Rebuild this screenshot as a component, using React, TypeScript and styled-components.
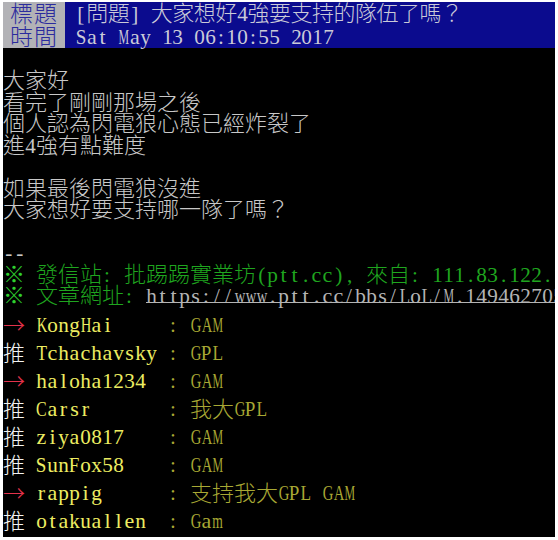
import React from 'react';
import styled, { createGlobalStyle } from 'styled-components';

interface Seg {
  t: string;
  c: string;
  u?: boolean;
}

const GRAY = '#c8c8c8';
const GREEN_HI = '#2fd02f';
const GREEN = '#1fa51f';
const LINK = '#b4b4b4';
const WHITE = '#f2f2f2';
const RED = '#e3324c';
const YELLOW = '#eded62';
const OLIVE = '#a8a834';

// Times-style advance widths (em), used to squeeze latin glyphs into a half-width cell
const EM: Record<string, number> = {
  A: .722, B: .667, C: .667, D: .722, E: .611, F: .556, G: .722, H: .722, I: .333, J: .389,
  K: .722, L: .611, M: .889, N: .722, O: .722, P: .556, Q: .722, R: .667, S: .556, T: .611,
  U: .722, V: .722, W: .944, X: .722, Y: .722, Z: .611,
  a: .444, b: .5, c: .444, d: .5, e: .444, f: .333, g: .5, h: .5, i: .278, j: .278, k: .5,
  l: .278, m: .778, n: .5, o: .5, p: .5, q: .5, r: .333, s: .389, t: .278, u: .5, v: .5,
  w: .722, x: .5, y: .5, z: .444,
};

const fit = (ch: string) => {
  const w = (EM[ch] ?? 0.5) * 22;
  return Math.min(1, 10.6 / w);
};

const isWide = (ch: string) => ch.charCodeAt(0) > 0x2000;

const BODY: Seg[][] = [
  [{ t: '大家好', c: GRAY }],
  [{ t: '看完了剛剛那場之後', c: GRAY }],
  [{ t: '個人認為閃電狼心態已經炸裂了', c: GRAY }],
  [{ t: '進4強有點難度', c: GRAY }],
  [],
  [{ t: '如果最後閃電狼沒進', c: GRAY }],
  [{ t: '大家想好要支持哪一隊了嗎？', c: GRAY }],
  [],
  [{ t: '--', c: GRAY }],
  [
    { t: '※', c: GREEN_HI },
    { t: ' 發信站: 批踢踢實業坊(ptt.cc), 來自: 111.83.122.178', c: GREEN },
  ],
  [
    { t: '※', c: GREEN_HI },
    { t: ' 文章網址: ', c: GREEN },
    { t: 'https://www.ptt.cc/bbs/LoL/M.1494627055.A.1F3.html', c: LINK, u: true },
  ],
];

const PUSHES: [string, string, string][] = [
  ['→', 'KongHai', 'GAM'],
  ['推', 'Tchachavsky', 'GPL'],
  ['→', 'haloha1234', 'GAM'],
  ['推', 'Carsr', '我大GPL'],
  ['推', 'ziya0817', 'GAM'],
  ['推', 'SunFox58', 'GAM'],
  ['→', 'rappig', '支持我大GPL GAM'],
  ['推', 'otakuallen', 'Gam'],
];

const Cells: React.FC<{ seg: Seg }> = ({ seg }) => (
  <Run $c={seg.c}>
    {Array.from(seg.t).map((ch, i) => {
      const wide = isWide(ch);
      return (
        <Glyph key={i} $wide={wide} $u={!!seg.u}>
          <Ink $sx={wide ? 1 : fit(ch)} $wide={wide}>
            {ch === ' ' ? '\u00a0' : ch}
          </Ink>
        </Glyph>
      );
    })}
  </Run>
);

const App: React.FC = () => {
  return (
    <>
      <GlobalStyle />
      <Screen>
        <Header>
          <HeaderRow>
            <Label>標題</Label>
            <Cells seg={{ t: ' [問題] 大家想好4強要支持的隊伍了嗎？', c: '#cacad8' }} />
          </HeaderRow>
          <HeaderRow>
            <Label>時間</Label>
            <Cells seg={{ t: ' Sat May 13 06:10:55 2017', c: '#cacad8' }} />
          </HeaderRow>
        </Header>

        <Body>
          {BODY.map((line, i) => (
            <Line key={i}>
              {line.map((seg, j) => (
                <Cells key={j} seg={seg} />
              ))}
            </Line>
          ))}
        </Body>

        <Pushes>
          {PUSHES.map(([tag, id, text], i) => (
            <Line key={i}>
              <Cells seg={{ t: tag, c: tag === '推' ? WHITE : RED }} />
              <Cells seg={{ t: ' ', c: GRAY }} />
              <Cells seg={{ t: id.padEnd(12, ' '), c: YELLOW }} />
              <Cells seg={{ t: ': ' + text, c: OLIVE }} />
            </Line>
          ))}
        </Pushes>
      </Screen>
    </>
  );
};

const GlobalStyle = createGlobalStyle`
  html, body {
    margin: 0;
    padding: 0;
    background: #ffffff;
  }
`;

const Screen = styled.div`
  --cw: 11px;
  --lh: 21.5px;
  margin: 2px 3px 0 3px;
  width: 552px;
  height: 535px;
  background: #000;
  overflow: hidden;
  font-family: 'Liberation Serif', 'Noto Sans CJK TC', serif;
`;

const Header = styled.div`
  --cw: 10.75px;
  --lh: 23px;
`;

const HeaderRow = styled.div`
  display: flex;
  height: 23px;
  background: #0b0b8e;
`;

const Label = styled.div`
  flex: 0 0 62px;
  display: flex;
  justify-content: center;
  align-items: center;
  background: #b2b2b6;
  color: #2b2b9e;
  font-family: 'Noto Sans CJK TC', sans-serif;
  font-weight: 300;
  font-size: 23px;
  line-height: 23px;
  letter-spacing: 1px;
  padding-bottom: 3px;
  box-sizing: border-box;
`;

const Body = styled.div`
  padding-top: 22px;
`;

const Pushes = styled.div`
  --lh: 28px;
  margin-top: 4.5px;
`;

const Line = styled.div`
  display: flex;
  height: var(--lh);
  white-space: pre;
`;

const Run = styled.span<{ $c: string }>`
  display: contents;
  color: ${p => p.$c};
`;

const Glyph = styled.span<{ $wide: boolean; $u: boolean }>`
  flex: none;
  display: flex;
  justify-content: center;
  width: calc(var(--cw) * ${p => (p.$wide ? 2 : 1)});
  height: var(--lh);
  line-height: var(--lh);
  font-size: 22px;
  font-weight: ${p => (p.$wide ? 300 : 400)};
  font-family: ${p => (p.$wide ? "'Noto Sans CJK TC', sans-serif" : "'Liberation Serif', serif")};
  ${p =>
    p.$u &&
    `background: linear-gradient(currentColor, currentColor) no-repeat left 0 bottom 4px / 100% 1px;`}
`;

const Ink = styled.span<{ $sx: number; $wide: boolean }>`
  display: inline-block;
  transform: ${p => (p.$wide ? 'translateY(-2px)' : `scaleX(${p.$sx})`)};
`;

export default App;
